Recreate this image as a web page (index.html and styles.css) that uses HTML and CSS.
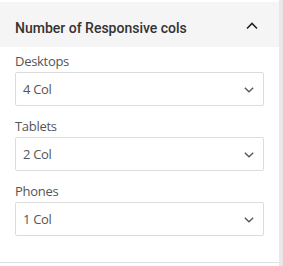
FILE: index.html
```html
<!DOCTYPE html>
<html lang="en">
<head>
    <meta charset="UTF-8">
    <meta name="viewport" content="width=device-width, initial-scale=1.0">
    <title>Responsive cols</title>
    <link rel="stylesheet" href="styles.css">
</head>
<body>
    <div class="panel">
        <div class="section">
            <div class="section-header">
                <span class="section-title">Number of Responsive cols</span>
                <svg class="caret-up" width="12" height="16" viewBox="0 0 12 16">
                    <polyline points="1,8.5 6,3.5 11,8.5" fill="none" stroke="#222" stroke-width="1.6"/>
                </svg>
            </div>
            <div class="section-body">
                <div class="form-group">
                    <label>Desktops</label>
                    <div class="select">
                        <span>4 Col</span>
                        <svg class="caret-down" width="10" height="6" viewBox="0 0 10 6">
                            <polyline points="0.8,0.8 5,4.8 9.2,0.8" fill="none" stroke="#555" stroke-width="1.3"/>
                        </svg>
                    </div>
                </div>
                <div class="form-group">
                    <label>Tablets</label>
                    <div class="select">
                        <span>2 Col</span>
                        <svg class="caret-down" width="10" height="6" viewBox="0 0 10 6">
                            <polyline points="0.8,0.8 5,4.8 9.2,0.8" fill="none" stroke="#555" stroke-width="1.3"/>
                        </svg>
                    </div>
                </div>
                <div class="form-group">
                    <label>Phones</label>
                    <div class="select">
                        <span>1 Col</span>
                        <svg class="caret-down" width="10" height="6" viewBox="0 0 10 6">
                            <polyline points="0.8,0.8 5,4.8 9.2,0.8" fill="none" stroke="#555" stroke-width="1.3"/>
                        </svg>
                    </div>
                </div>
            </div>
        </div>
    </div>
</body>
</html>
```
FILE: styles.css
```css
body {
    margin: 0;
    background-color: #e8e8e8;
    font-family: "Open Sans", Arial, sans-serif;
}
.panel {
    width: 279px;
    min-height: 100vh;
    background: #fff;
    padding-top: 2px;
    box-sizing: border-box;
}
.section {
    border-bottom: 1px solid #e2e2e2;
}
.section-header {
    display: flex;
    justify-content: space-between;
    align-items: flex-start;
    height: 45px;
    box-sizing: border-box;
    padding: 18px 15px 0 15px;
    background-color: #f5f5f5;
}
.section-title {
    font-family: Roboto, Arial, sans-serif;
    font-weight: 500;
    font-size: 14px;
    line-height: 16px;
    color: #333;
}
.caret-up {
    display: block;
    margin-right: 6px;
}
.section-body {
    padding: 5px 15px 26px 15px;
}
.form-group {
    margin-bottom: 11px;
}
.form-group:last-child {
    margin-bottom: 0;
}
label {
    display: block;
    font-size: 13px;
    line-height: 18px;
    letter-spacing: -0.3px;
    color: #555;
    margin-bottom: 2px;
}
.select {
    display: flex;
    justify-content: space-between;
    align-items: center;
    height: 34px;
    box-sizing: border-box;
    border: 1px solid #dcdcdc;
    border-radius: 2px;
    padding: 0 9px 0 7px;
    font-size: 13px;
    letter-spacing: -0.3px;
    color: #555;
}
.caret-down {
    display: block;
    margin-top: 2px;
}
```
